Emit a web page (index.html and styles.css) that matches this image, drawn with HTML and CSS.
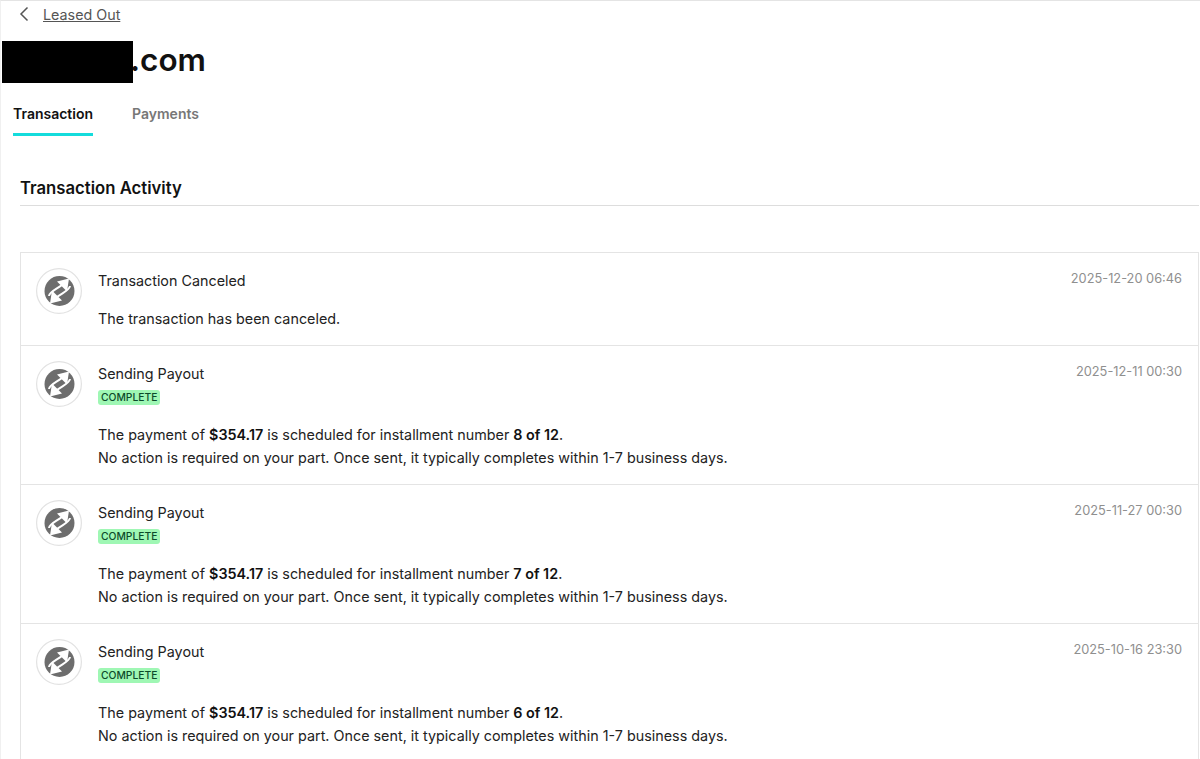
FILE: index.html
```html
<!DOCTYPE html>
<html lang="en">
<head>
    <meta charset="UTF-8">
    <title>Leased Out - Transaction</title>
    <link rel="stylesheet" href="styles.css">
</head>
<body>
    <!-- Back link -->
    <div class="back-row">
        <svg class="back-icon" width="10" height="16" viewBox="0 0 10 16"><path d="M8.5 1.5 L2 8 L8.5 14.5" fill="none" stroke="#555" stroke-width="1.5"/></svg>
        <a class="back-link" href="#">Leased Out</a>
    </div>

    <h1 class="domain"><span class="redacted"></span><span class="domain-tld">.com</span></h1>

    <!-- Tabs -->
    <div class="tabs">
        <div class="tab active">Transaction</div>
        <div class="tab">Payments</div>
    </div>

    <div class="section">
        <h2 class="section-title">Transaction Activity</h2>

        <div class="activity">
            <div class="row short">
                <svg class="status-icon" viewBox="0 0 46 46"><use href="#sync"/></svg>
                <div class="row-body">
                    <div class="row-title">Transaction Canceled</div>
                    <p class="row-text first">The transaction has been canceled.</p>
                </div>
                <div class="row-date">2025-12-20 06:46</div>
            </div>

            <div class="row">
                <svg class="status-icon" viewBox="0 0 46 46"><use href="#sync"/></svg>
                <div class="row-body">
                    <div class="row-title">Sending Payout</div>
                    <span class="badge">COMPLETE</span>
                    <p class="row-text">The payment of <b>$354.17</b> is scheduled for installment number <b>8 of 12</b>.<br>No action is required on your part. Once sent, it typically completes within 1-7 business days.</p>
                </div>
                <div class="row-date">2025-12-11 00:30</div>
            </div>

            <div class="row">
                <svg class="status-icon" viewBox="0 0 46 46"><use href="#sync"/></svg>
                <div class="row-body">
                    <div class="row-title">Sending Payout</div>
                    <span class="badge">COMPLETE</span>
                    <p class="row-text">The payment of <b>$354.17</b> is scheduled for installment number <b>7 of 12</b>.<br>No action is required on your part. Once sent, it typically completes within 1-7 business days.</p>
                </div>
                <div class="row-date">2025-11-27 00:30</div>
            </div>

            <div class="row">
                <svg class="status-icon" viewBox="0 0 46 46"><use href="#sync"/></svg>
                <div class="row-body">
                    <div class="row-title">Sending Payout</div>
                    <span class="badge">COMPLETE</span>
                    <p class="row-text">The payment of <b>$354.17</b> is scheduled for installment number <b>6 of 12</b>.<br>No action is required on your part. Once sent, it typically completes within 1-7 business days.</p>
                </div>
                <div class="row-date">2025-10-16 23:30</div>
            </div>
        </div>
    </div>

    <!-- Shared status icon -->
    <svg class="icon-defs" width="0" height="0">
        <symbol id="sync" viewBox="0 0 46 46">
            <circle cx="23" cy="23" r="22.4" fill="#fff" stroke="#e2e2e2" stroke-width="1.2"/>
            <circle cx="23.5" cy="23" r="15" fill="#6d6d6d"/>
            <path d="M33 10.5 L21 13.5 L31 23.5 Z" fill="#fff"/>
            <path d="M13 28 C13.5 24 19 22 26 17" fill="none" stroke="#fff" stroke-width="2"/>
            <g transform="rotate(180 23.5 23)">
                <path d="M33 10.5 L21 13.5 L31 23.5 Z" fill="#fff"/>
                <path d="M13 28 C13.5 24 19 22 26 17" fill="none" stroke="#fff" stroke-width="2"/>
            </g>
        </symbol>
    </svg>
</body>
</html>
```
FILE: styles.css
```css
* {
    margin: 0;
    padding: 0;
    box-sizing: border-box;
}

body {
    height: 759px;
    overflow: hidden;
    background: #fff;
    color: #111;
    font-family: 'Inter', 'Liberation Sans', sans-serif;
    border-top: 1px solid #e4e4e4;
    border-left: 1px solid #f0f0f0;
}

/* Back link */
.back-row {
    display: flex;
    align-items: center;
    height: 26px;
    padding-left: 18px;
}
.back-icon {
    margin-right: 14px;
}
.back-link {
    font-size: 14.3px;
    color: #555;
    text-decoration: underline;
}

/* Domain title */
.domain {
    display: flex;
    height: 42px;
    margin-top: 14px;
    padding-left: 1px;
    font-size: 31.5px;
    font-weight: 600;
    line-height: 38px;
    color: #111;
}
.redacted {
    display: block;
    width: 131px;
    height: 42px;
    background: #000;
    margin-right: -3px;
}
.domain-tld {
    display: block;
}

/* Tabs */
.tabs {
    display: flex;
    gap: 39px;
    margin-top: 17px;
    padding-left: 12px;
}
.tab {
    height: 36px;
    padding-top: 5px;
    font-size: 14px;
    font-weight: 600;
    color: #777;
}
.tab.active {
    color: #111;
    border-bottom: 3px solid #14dcdc;
}

/* Activity list */
.section {
    margin: 38px 1px 0 19px;
}
.section-title {
    font-size: 16.7px;
    font-weight: 600;
    line-height: 28px;
    color: #111;
    height: 32px;
    border-bottom: 1px solid #ddd;
}
.activity {
    margin-top: 46px;
    border: 1px solid #e4e4e4;
    border-bottom: none;
}
.row {
    display: flex;
    height: 139px;
    padding: 15px 16px 0 15px;
    border-bottom: 1px solid #e4e4e4;
}
.row.short {
    height: 93px;
}
.status-icon {
    width: 46px;
    height: 46px;
    flex-shrink: 0;
}
.row-body {
    flex: 1;
    margin-left: 16px;
}
.row-title {
    font-size: 14.35px;
    line-height: 20px;
    margin-top: 3px;
    color: #222;
}
.badge {
    display: inline-block;
    margin-top: 6px;
    padding: 0 3px;
    height: 15px;
    line-height: 15px;
    font-size: 10.3px;
    font-weight: 500;
    color: #0c4a2a;
    background: #9ff7b4;
    border-radius: 3px;
    vertical-align: top;
}
.row-text {
    margin-top: 18px;
    font-size: 14.35px;
    line-height: 23px;
    color: #222;
}
.row-text.first {
    margin-top: 16px;
}
.row-text b {
    font-weight: 600;
    color: #111;
}
.row-date {
    font-size: 12.8px;
    line-height: 20px;
    margin-top: 1px;
    color: #8f8f8f;
}

.icon-defs {
    position: absolute;
}
```
